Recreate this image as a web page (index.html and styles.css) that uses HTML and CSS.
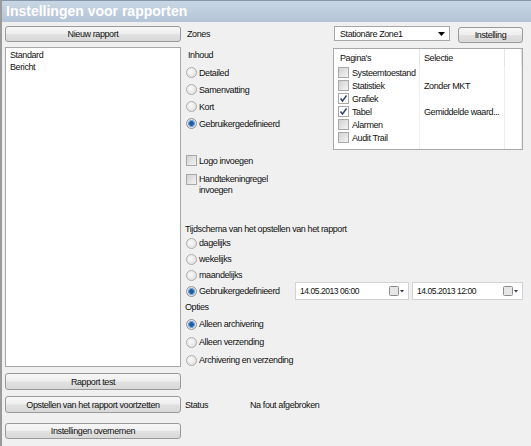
FILE: index.html
```html
<!DOCTYPE html>
<html>
<head>
<meta charset="utf-8">
<link rel="stylesheet" href="styles.css">
</head>
<body>
<div class="window">
  <div class="titlebar">Instellingen voor rapporten</div>
  <div class="main">
    <div class="left">
      <button class="btn btn-new">Nieuw rapport</button>
      <div class="listbox">
        <div class="item">Standard</div>
        <div class="item">Bericht</div>
      </div>
      <button class="btn btn-test">Rapport test</button>
      <button class="btn btn-cont">Opstellen van het rapport voortzetten</button>
      <button class="btn btn-apply">Instellingen overnemen</button>
    </div>
    <div class="right">
      <div class="zones-row">
        <span class="zones">Zones</span>
        <div class="combo"><span>Stationäre Zone1</span><svg width="7" height="4" viewBox="0 0 7 4"><path d="M0 0h7L3.5 4z" fill="#000"/></svg></div>
        <button class="btn btn-set">Instelling</button>
      </div>
      <div class="content-row">
        <div class="content-col">
          <div class="lbl-inhoud">Inhoud</div>
          <div class="opt"><span class="radio"></span><span>Detailed</span></div>
          <div class="opt"><span class="radio"></span><span>Samenvatting</span></div>
          <div class="opt"><span class="radio"></span><span>Kort</span></div>
          <div class="opt"><span class="radio on"></span><span>Gebruikergedefinieerd</span></div>
          <div class="chk-row"><span class="cb"></span><span>Logo invoegen</span></div>
          <div class="chk-row2"><span class="cb"></span><span>Handtekeningregel<br>invoegen</span></div>
        </div>
        <div class="tbl">
          <div class="trow hdr"><div class="cell">Pagina's</div><div class="cell">Selectie</div><div class="cell"></div></div>
          <div class="trow"><div class="cell c1"><span class="cb"></span>Systeemtoestand</div><div class="cell c2"></div><div class="cell"></div></div>
          <div class="trow"><div class="cell c1"><span class="cb"></span>Statistiek</div><div class="cell c2">Zonder MKT</div><div class="cell"></div></div>
          <div class="trow"><div class="cell c1"><span class="cb on"><svg width="9" height="9" viewBox="0 0 9 9"><path d="M1.5 4.5L3.5 7L7.5 1.5" stroke="#2b3f70" stroke-width="1.4" fill="none"/></svg></span>Grafiek</div><div class="cell c2"></div><div class="cell"></div></div>
          <div class="trow"><div class="cell c1"><span class="cb on"><svg width="9" height="9" viewBox="0 0 9 9"><path d="M1.5 4.5L3.5 7L7.5 1.5" stroke="#2b3f70" stroke-width="1.4" fill="none"/></svg></span>Tabel</div><div class="cell c2">Gemiddelde waard...</div><div class="cell"></div></div>
          <div class="trow"><div class="cell c1"><span class="cb"></span>Alarmen</div><div class="cell c2"></div><div class="cell"></div></div>
          <div class="trow"><div class="cell c1"><span class="cb"></span>Audit Trail</div><div class="cell c2"></div><div class="cell"></div></div>
          <div class="trow fill"><div class="cell"></div><div class="cell"></div><div class="cell"></div></div>
        </div>
      </div>
      <div class="sect-lbl sched-lbl">Tijdschema van het opstellen van het rapport</div>
      <div class="opt o16"><span class="radio"></span><span>dagelijks</span></div>
      <div class="opt o16"><span class="radio"></span><span>wekelijks</span></div>
      <div class="opt o16"><span class="radio"></span><span>maandelijks</span></div>
      <div class="opt o16 custom">
        <div class="custom-lbl"><span class="radio on"></span><span>Gebruikergedefinieerd</span></div>
        <div class="picker p1"><span class="date">14.05.2013 06:00</span><svg width="15" height="10" viewBox="0 0 15 10"><rect x="0.5" y="0.5" width="9" height="9" rx="1" fill="#e6e6e6" stroke="#8c8c8c"/><path d="M11 4h4l-2 2.5z" fill="#2d3a55"/></svg></div>
        <div class="picker p2"><span class="date">14.05.2013 12:00</span><svg width="15" height="10" viewBox="0 0 15 10"><rect x="0.5" y="0.5" width="9" height="9" rx="1" fill="#e6e6e6" stroke="#8c8c8c"/><path d="M11 4h4l-2 2.5z" fill="#2d3a55"/></svg></div>
      </div>
      <div class="sect-lbl opt-lbl">Opties</div>
      <div class="opt o18"><span class="radio on"></span><span>Alleen archivering</span></div>
      <div class="opt o18"><span class="radio"></span><span>Alleen verzending</span></div>
      <div class="opt o18"><span class="radio"></span><span>Archivering en verzending</span></div>
      <div class="status-row"><span class="status-lbl">Status</span><span>Na fout afgebroken</span></div>
    </div>
  </div>
</div>
</body>
</html>
```
FILE: styles.css
```css
body {
  margin: 0;
  background: #f0f0f0;
  font-family: "Liberation Sans", Arial, sans-serif;
  font-size: 9px;
  letter-spacing: -0.4px;
  color: #111;
}
.window {
  width: 531px;
  height: 446px;
  box-sizing: border-box;
  border-left: 2px solid #9a9a9a;
  overflow: hidden;
}
.titlebar {
  height: 22px;
  box-sizing: border-box;
  border-top: 1px solid #8797ab;
  background: linear-gradient(#c9d6e4, #b3c4d7);
  color: #fff;
  font: bold 14px "Liberation Sans", Arial, sans-serif;
  letter-spacing: 0;
  line-height: 21px;
  padding-left: 4px;
}
.main {
  display: flex;
  padding: 4px 0 0 3px;
}
.left {
  width: 176px;
  display: flex;
  flex-direction: column;
}
.btn {
  font: inherit;
  letter-spacing: inherit;
  color: #111;
  box-sizing: border-box;
  border: 1px solid #9a9a9a;
  border-radius: 3px;
  background: linear-gradient(#f7f7f7 0%, #eeeeee 48%, #e1e1e1 52%, #d8d8d8 100%);
  padding: 0;
  margin: 0;
  display: flex;
  align-items: center;
  justify-content: center;
}
.btn-new { height: 16px; }
.listbox {
  margin-top: 5px;
  height: 320px;
  box-sizing: border-box;
  background: #fff;
  border: 1px solid #a8a8a8;
  padding-top: 1px;
}
.item {
  height: 12px;
  line-height: 12px;
  padding-left: 4px;
}
.btn-test { margin-top: 6px; height: 17px; }
.btn-cont { margin-top: 6px; height: 17px; }
.btn-apply { margin-top: 10px; height: 16px; }

.right {
  margin-left: 4px;
  width: 338px;
  display: flex;
  flex-direction: column;
}
.zones-row {
  display: flex;
  align-items: flex-start;
  height: 17px;
}
.zones {
  width: 147px;
  padding-left: 2px;
  line-height: 16px;
}
.combo {
  width: 116px;
  height: 15px;
  box-sizing: border-box;
  border: 1px solid #a8a8a8;
  background: #fff;
  display: flex;
  align-items: center;
  justify-content: space-between;
  padding: 0 4px 0 5px;
}
.btn-set {
  margin-left: 8px;
  margin-top: 1px;
  width: 65px;
  height: 16px;
}
.content-row {
  display: flex;
  height: 153px;
}
.content-col { width: 148px; }
.lbl-inhoud {
  margin-top: 4px;
  height: 17px;
  line-height: 17px;
  padding-left: 3px;
}
.opt {
  display: flex;
  align-items: center;
  gap: 2px;
  height: 17px;
  padding-left: 1px;
}
.o16 { height: 16px; }
.o18 { height: 18px; }
.radio {
  width: 11px;
  height: 11px;
  border-radius: 50%;
  box-sizing: border-box;
  border: 1px solid #adadad;
  background: radial-gradient(circle at 40% 40%, #fbfbfb, #d9d9d9);
  flex-shrink: 0;
}
.radio.on {
  border-color: #949494;
  background: radial-gradient(circle, #1d5ba3 0 2px, #6fa3dc 2.6px 3.2px, #e4e4e4 3.8px);
}
.cb {
  width: 11px;
  height: 11px;
  box-sizing: border-box;
  border: 1px solid #a8a8a8;
  background: linear-gradient(135deg, #d2d2d2, #f3f3f3);
  flex-shrink: 0;
  display: flex;
  align-items: center;
  justify-content: center;
}
.cb.on { background: #fff; }
.chk-row {
  margin-top: 20px;
  display: flex;
  align-items: center;
  gap: 2px;
  height: 17px;
  padding-left: 1px;
}
.chk-row2 {
  margin-top: 5px;
  display: flex;
  align-items: flex-start;
  gap: 2px;
  line-height: 11px;
  padding-left: 1px;
}

.tbl {
  margin-top: 5px;
  width: 190px;
  height: 102px;
  box-sizing: border-box;
  border: 1px solid #a8a8a8;
  background: #fff;
  display: flex;
  flex-direction: column;
}
.trow {
  display: grid;
  grid-template-columns: 86px 85px 1fr;
  height: 13px;
}
.trow.hdr { height: 17px; }
.trow.fill { flex: 1; }
.cell {
  box-sizing: border-box;
  border-right: 1px solid #eeeeee;
  display: flex;
  align-items: center;
  white-space: nowrap;
  overflow: hidden;
}
.hdr .cell {
  padding-left: 6px;
  border-right-color: #e3e3e3;
}
.hdr .cell + .cell { padding-left: 4px; }
.c1 { padding-left: 4px; gap: 3px; }
.c2 { padding-left: 4px; }

.sect-lbl { line-height: 12px; }
.sched-lbl { margin-top: 27px; height: 12px; }
.custom { gap: 0; }
.custom-lbl {
  width: 109px;
  display: flex;
  align-items: center;
  gap: 2px;
}
.picker {
  height: 18px;
  box-sizing: border-box;
  border: 1px solid #d2d2d2;
  background: #fff;
  display: flex;
  align-items: center;
  justify-content: space-between;
  padding: 0 4px 0 4px;
}
.p1 { width: 114px; }
.p2 { width: 111px; margin-left: 3px; }
.date { font-size: 8.5px; letter-spacing: -0.45px; }
.opt-lbl { height: 16px; line-height: 16px; }
.status-row {
  margin-top: 27px;
  height: 17px;
  display: flex;
  align-items: center;
}
.status-lbl { width: 65px; }
```
